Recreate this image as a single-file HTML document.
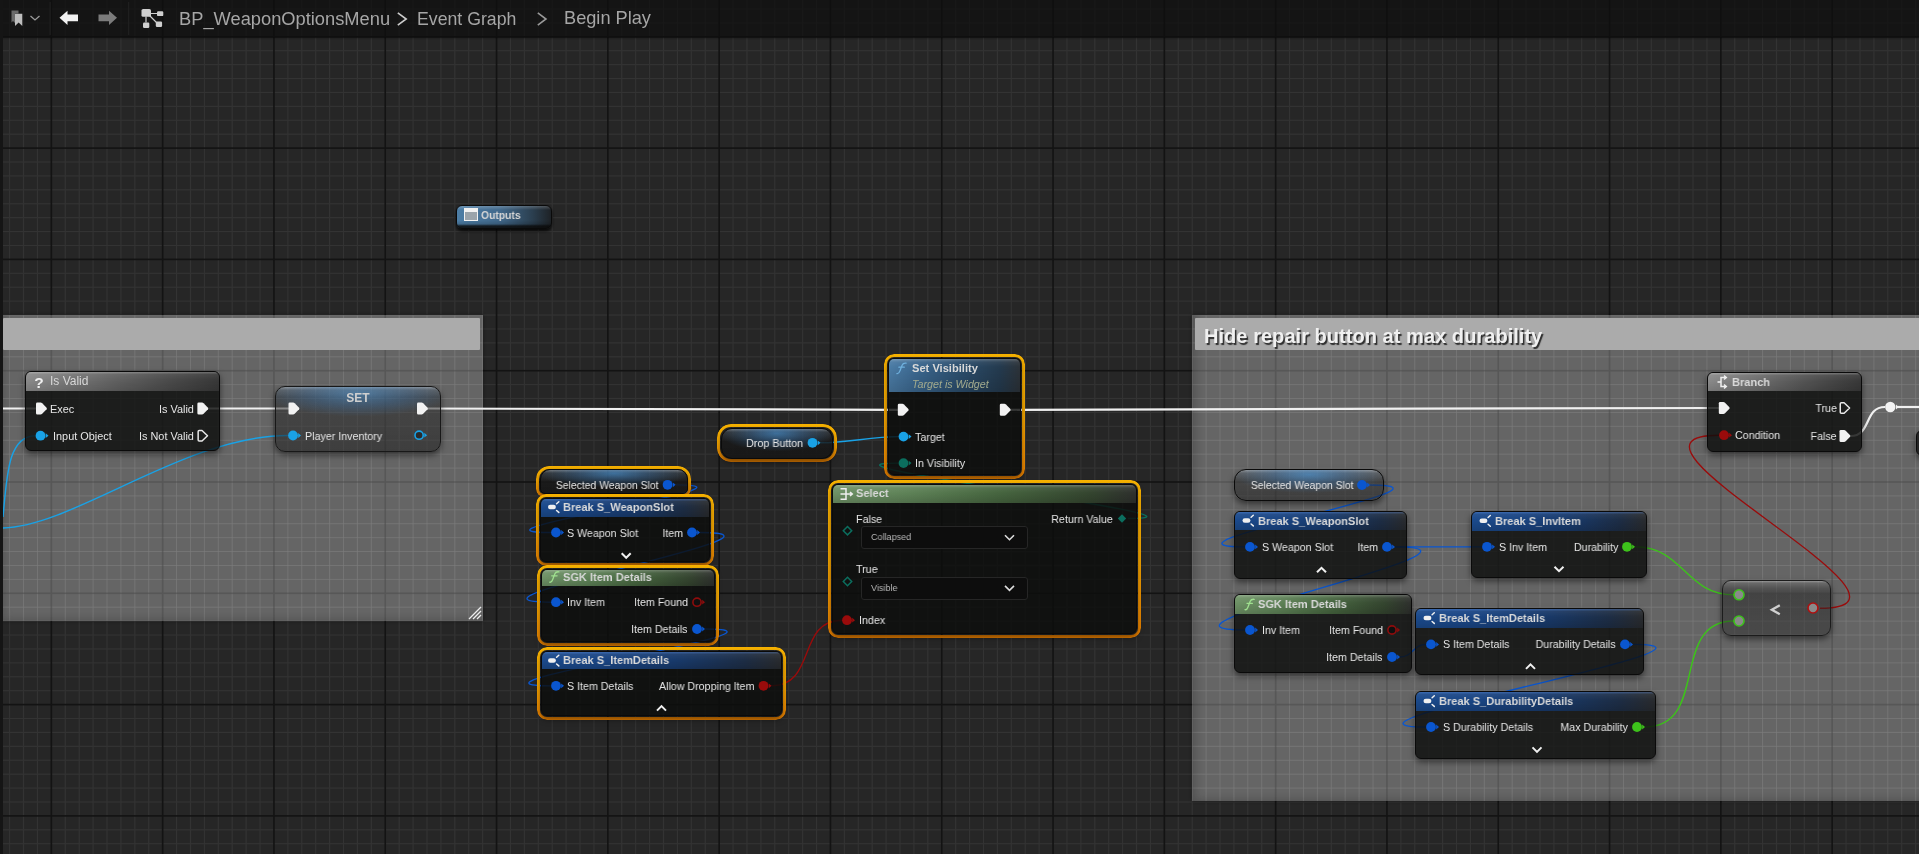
<!DOCTYPE html><html><head><meta charset="utf-8"><title>BP_WeaponOptionsMenu</title><style>html,body{margin:0;padding:0;width:1919px;height:854px;overflow:hidden;background:#262626;}body{position:relative;font-family:"Liberation Sans", sans-serif;-webkit-font-smoothing:antialiased;} body>div{will-change:transform;}.node{position:absolute;box-sizing:border-box;border-radius:6px;background:rgba(14,14,14,0.93);border:1px solid #0a0a0a;box-shadow:0 3px 6px rgba(0,0,0,0.5);overflow:hidden;}.hdr{position:absolute;left:0;top:0;right:0;}.sel{position:absolute;box-sizing:border-box;padding:3px;border-radius:9px;background:linear-gradient(to bottom,#f8b300 0%,#f2a400 50%,#e57d00 100%);-webkit-mask:linear-gradient(#000 0 0) content-box,linear-gradient(#000 0 0);-webkit-mask-composite:xor;mask-composite:exclude;}</style></head><body><svg style="position:absolute;left:0;top:0" width="1919" height="854"><rect x="-4.90" y="0" width="1.2" height="854" fill="#333333"/><rect x="9.01" y="0" width="1.2" height="854" fill="#333333"/><rect x="22.92" y="0" width="1.2" height="854" fill="#333333"/><rect x="36.84" y="0" width="1.2" height="854" fill="#333333"/><rect x="64.66" y="0" width="1.2" height="854" fill="#333333"/><rect x="78.58" y="0" width="1.2" height="854" fill="#333333"/><rect x="92.49" y="0" width="1.2" height="854" fill="#333333"/><rect x="106.40" y="0" width="1.2" height="854" fill="#333333"/><rect x="120.31" y="0" width="1.2" height="854" fill="#333333"/><rect x="134.23" y="0" width="1.2" height="854" fill="#333333"/><rect x="148.14" y="0" width="1.2" height="854" fill="#333333"/><rect x="175.96" y="0" width="1.2" height="854" fill="#333333"/><rect x="189.88" y="0" width="1.2" height="854" fill="#333333"/><rect x="203.79" y="0" width="1.2" height="854" fill="#333333"/><rect x="217.70" y="0" width="1.2" height="854" fill="#333333"/><rect x="231.61" y="0" width="1.2" height="854" fill="#333333"/><rect x="245.53" y="0" width="1.2" height="854" fill="#333333"/><rect x="259.44" y="0" width="1.2" height="854" fill="#333333"/><rect x="287.26" y="0" width="1.2" height="854" fill="#333333"/><rect x="301.17" y="0" width="1.2" height="854" fill="#333333"/><rect x="315.09" y="0" width="1.2" height="854" fill="#333333"/><rect x="329.00" y="0" width="1.2" height="854" fill="#333333"/><rect x="342.91" y="0" width="1.2" height="854" fill="#333333"/><rect x="356.82" y="0" width="1.2" height="854" fill="#333333"/><rect x="370.74" y="0" width="1.2" height="854" fill="#333333"/><rect x="398.56" y="0" width="1.2" height="854" fill="#333333"/><rect x="412.47" y="0" width="1.2" height="854" fill="#333333"/><rect x="426.39" y="0" width="1.2" height="854" fill="#333333"/><rect x="440.30" y="0" width="1.2" height="854" fill="#333333"/><rect x="454.21" y="0" width="1.2" height="854" fill="#333333"/><rect x="468.12" y="0" width="1.2" height="854" fill="#333333"/><rect x="482.04" y="0" width="1.2" height="854" fill="#333333"/><rect x="509.86" y="0" width="1.2" height="854" fill="#333333"/><rect x="523.77" y="0" width="1.2" height="854" fill="#333333"/><rect x="537.69" y="0" width="1.2" height="854" fill="#333333"/><rect x="551.60" y="0" width="1.2" height="854" fill="#333333"/><rect x="565.51" y="0" width="1.2" height="854" fill="#333333"/><rect x="579.42" y="0" width="1.2" height="854" fill="#333333"/><rect x="593.34" y="0" width="1.2" height="854" fill="#333333"/><rect x="621.16" y="0" width="1.2" height="854" fill="#333333"/><rect x="635.07" y="0" width="1.2" height="854" fill="#333333"/><rect x="648.99" y="0" width="1.2" height="854" fill="#333333"/><rect x="662.90" y="0" width="1.2" height="854" fill="#333333"/><rect x="676.81" y="0" width="1.2" height="854" fill="#333333"/><rect x="690.72" y="0" width="1.2" height="854" fill="#333333"/><rect x="704.64" y="0" width="1.2" height="854" fill="#333333"/><rect x="732.46" y="0" width="1.2" height="854" fill="#333333"/><rect x="746.37" y="0" width="1.2" height="854" fill="#333333"/><rect x="760.29" y="0" width="1.2" height="854" fill="#333333"/><rect x="774.20" y="0" width="1.2" height="854" fill="#333333"/><rect x="788.11" y="0" width="1.2" height="854" fill="#333333"/><rect x="802.02" y="0" width="1.2" height="854" fill="#333333"/><rect x="815.94" y="0" width="1.2" height="854" fill="#333333"/><rect x="843.76" y="0" width="1.2" height="854" fill="#333333"/><rect x="857.67" y="0" width="1.2" height="854" fill="#333333"/><rect x="871.59" y="0" width="1.2" height="854" fill="#333333"/><rect x="885.50" y="0" width="1.2" height="854" fill="#333333"/><rect x="899.41" y="0" width="1.2" height="854" fill="#333333"/><rect x="913.32" y="0" width="1.2" height="854" fill="#333333"/><rect x="927.24" y="0" width="1.2" height="854" fill="#333333"/><rect x="955.06" y="0" width="1.2" height="854" fill="#333333"/><rect x="968.97" y="0" width="1.2" height="854" fill="#333333"/><rect x="982.89" y="0" width="1.2" height="854" fill="#333333"/><rect x="996.80" y="0" width="1.2" height="854" fill="#333333"/><rect x="1010.71" y="0" width="1.2" height="854" fill="#333333"/><rect x="1024.62" y="0" width="1.2" height="854" fill="#333333"/><rect x="1038.54" y="0" width="1.2" height="854" fill="#333333"/><rect x="1066.36" y="0" width="1.2" height="854" fill="#333333"/><rect x="1080.28" y="0" width="1.2" height="854" fill="#333333"/><rect x="1094.19" y="0" width="1.2" height="854" fill="#333333"/><rect x="1108.10" y="0" width="1.2" height="854" fill="#333333"/><rect x="1122.01" y="0" width="1.2" height="854" fill="#333333"/><rect x="1135.92" y="0" width="1.2" height="854" fill="#333333"/><rect x="1149.84" y="0" width="1.2" height="854" fill="#333333"/><rect x="1177.66" y="0" width="1.2" height="854" fill="#333333"/><rect x="1191.58" y="0" width="1.2" height="854" fill="#333333"/><rect x="1205.49" y="0" width="1.2" height="854" fill="#333333"/><rect x="1219.40" y="0" width="1.2" height="854" fill="#333333"/><rect x="1233.31" y="0" width="1.2" height="854" fill="#333333"/><rect x="1247.22" y="0" width="1.2" height="854" fill="#333333"/><rect x="1261.14" y="0" width="1.2" height="854" fill="#333333"/><rect x="1288.96" y="0" width="1.2" height="854" fill="#333333"/><rect x="1302.88" y="0" width="1.2" height="854" fill="#333333"/><rect x="1316.79" y="0" width="1.2" height="854" fill="#333333"/><rect x="1330.70" y="0" width="1.2" height="854" fill="#333333"/><rect x="1344.61" y="0" width="1.2" height="854" fill="#333333"/><rect x="1358.53" y="0" width="1.2" height="854" fill="#333333"/><rect x="1372.44" y="0" width="1.2" height="854" fill="#333333"/><rect x="1400.26" y="0" width="1.2" height="854" fill="#333333"/><rect x="1414.17" y="0" width="1.2" height="854" fill="#333333"/><rect x="1428.09" y="0" width="1.2" height="854" fill="#333333"/><rect x="1442.00" y="0" width="1.2" height="854" fill="#333333"/><rect x="1455.91" y="0" width="1.2" height="854" fill="#333333"/><rect x="1469.83" y="0" width="1.2" height="854" fill="#333333"/><rect x="1483.74" y="0" width="1.2" height="854" fill="#333333"/><rect x="1511.56" y="0" width="1.2" height="854" fill="#333333"/><rect x="1525.47" y="0" width="1.2" height="854" fill="#333333"/><rect x="1539.39" y="0" width="1.2" height="854" fill="#333333"/><rect x="1553.30" y="0" width="1.2" height="854" fill="#333333"/><rect x="1567.21" y="0" width="1.2" height="854" fill="#333333"/><rect x="1581.12" y="0" width="1.2" height="854" fill="#333333"/><rect x="1595.04" y="0" width="1.2" height="854" fill="#333333"/><rect x="1622.86" y="0" width="1.2" height="854" fill="#333333"/><rect x="1636.78" y="0" width="1.2" height="854" fill="#333333"/><rect x="1650.69" y="0" width="1.2" height="854" fill="#333333"/><rect x="1664.60" y="0" width="1.2" height="854" fill="#333333"/><rect x="1678.51" y="0" width="1.2" height="854" fill="#333333"/><rect x="1692.42" y="0" width="1.2" height="854" fill="#333333"/><rect x="1706.34" y="0" width="1.2" height="854" fill="#333333"/><rect x="1734.16" y="0" width="1.2" height="854" fill="#333333"/><rect x="1748.08" y="0" width="1.2" height="854" fill="#333333"/><rect x="1761.99" y="0" width="1.2" height="854" fill="#333333"/><rect x="1775.90" y="0" width="1.2" height="854" fill="#333333"/><rect x="1789.81" y="0" width="1.2" height="854" fill="#333333"/><rect x="1803.72" y="0" width="1.2" height="854" fill="#333333"/><rect x="1817.64" y="0" width="1.2" height="854" fill="#333333"/><rect x="1845.46" y="0" width="1.2" height="854" fill="#333333"/><rect x="1859.38" y="0" width="1.2" height="854" fill="#333333"/><rect x="1873.29" y="0" width="1.2" height="854" fill="#333333"/><rect x="1887.20" y="0" width="1.2" height="854" fill="#333333"/><rect x="1901.11" y="0" width="1.2" height="854" fill="#333333"/><rect x="1915.03" y="0" width="1.2" height="854" fill="#333333"/><rect x="0" y="-5.54" width="1919" height="1.2" fill="#333333"/><rect x="0" y="8.37" width="1919" height="1.2" fill="#333333"/><rect x="0" y="22.29" width="1919" height="1.2" fill="#333333"/><rect x="0" y="50.11" width="1919" height="1.2" fill="#333333"/><rect x="0" y="64.03" width="1919" height="1.2" fill="#333333"/><rect x="0" y="77.94" width="1919" height="1.2" fill="#333333"/><rect x="0" y="91.85" width="1919" height="1.2" fill="#333333"/><rect x="0" y="105.76" width="1919" height="1.2" fill="#333333"/><rect x="0" y="119.67" width="1919" height="1.2" fill="#333333"/><rect x="0" y="133.59" width="1919" height="1.2" fill="#333333"/><rect x="0" y="161.41" width="1919" height="1.2" fill="#333333"/><rect x="0" y="175.32" width="1919" height="1.2" fill="#333333"/><rect x="0" y="189.24" width="1919" height="1.2" fill="#333333"/><rect x="0" y="203.15" width="1919" height="1.2" fill="#333333"/><rect x="0" y="217.06" width="1919" height="1.2" fill="#333333"/><rect x="0" y="230.97" width="1919" height="1.2" fill="#333333"/><rect x="0" y="244.89" width="1919" height="1.2" fill="#333333"/><rect x="0" y="272.71" width="1919" height="1.2" fill="#333333"/><rect x="0" y="286.62" width="1919" height="1.2" fill="#333333"/><rect x="0" y="300.54" width="1919" height="1.2" fill="#333333"/><rect x="0" y="314.45" width="1919" height="1.2" fill="#333333"/><rect x="0" y="328.36" width="1919" height="1.2" fill="#333333"/><rect x="0" y="342.27" width="1919" height="1.2" fill="#333333"/><rect x="0" y="356.19" width="1919" height="1.2" fill="#333333"/><rect x="0" y="384.01" width="1919" height="1.2" fill="#333333"/><rect x="0" y="397.92" width="1919" height="1.2" fill="#333333"/><rect x="0" y="411.84" width="1919" height="1.2" fill="#333333"/><rect x="0" y="425.75" width="1919" height="1.2" fill="#333333"/><rect x="0" y="439.66" width="1919" height="1.2" fill="#333333"/><rect x="0" y="453.57" width="1919" height="1.2" fill="#333333"/><rect x="0" y="467.49" width="1919" height="1.2" fill="#333333"/><rect x="0" y="495.31" width="1919" height="1.2" fill="#333333"/><rect x="0" y="509.22" width="1919" height="1.2" fill="#333333"/><rect x="0" y="523.14" width="1919" height="1.2" fill="#333333"/><rect x="0" y="537.05" width="1919" height="1.2" fill="#333333"/><rect x="0" y="550.96" width="1919" height="1.2" fill="#333333"/><rect x="0" y="564.88" width="1919" height="1.2" fill="#333333"/><rect x="0" y="578.79" width="1919" height="1.2" fill="#333333"/><rect x="0" y="606.61" width="1919" height="1.2" fill="#333333"/><rect x="0" y="620.52" width="1919" height="1.2" fill="#333333"/><rect x="0" y="634.44" width="1919" height="1.2" fill="#333333"/><rect x="0" y="648.35" width="1919" height="1.2" fill="#333333"/><rect x="0" y="662.26" width="1919" height="1.2" fill="#333333"/><rect x="0" y="676.17" width="1919" height="1.2" fill="#333333"/><rect x="0" y="690.09" width="1919" height="1.2" fill="#333333"/><rect x="0" y="717.91" width="1919" height="1.2" fill="#333333"/><rect x="0" y="731.82" width="1919" height="1.2" fill="#333333"/><rect x="0" y="745.74" width="1919" height="1.2" fill="#333333"/><rect x="0" y="759.65" width="1919" height="1.2" fill="#333333"/><rect x="0" y="773.56" width="1919" height="1.2" fill="#333333"/><rect x="0" y="787.48" width="1919" height="1.2" fill="#333333"/><rect x="0" y="801.39" width="1919" height="1.2" fill="#333333"/><rect x="0" y="829.21" width="1919" height="1.2" fill="#333333"/><rect x="0" y="843.12" width="1919" height="1.2" fill="#333333"/><rect x="0" y="857.04" width="1919" height="1.2" fill="#333333"/><rect x="50.55" y="0" width="1.6" height="854" fill="#131313"/><rect x="161.85" y="0" width="1.6" height="854" fill="#131313"/><rect x="273.15" y="0" width="1.6" height="854" fill="#131313"/><rect x="384.45" y="0" width="1.6" height="854" fill="#131313"/><rect x="495.75" y="0" width="1.6" height="854" fill="#131313"/><rect x="607.05" y="0" width="1.6" height="854" fill="#131313"/><rect x="718.35" y="0" width="1.6" height="854" fill="#131313"/><rect x="829.65" y="0" width="1.6" height="854" fill="#131313"/><rect x="940.95" y="0" width="1.6" height="854" fill="#131313"/><rect x="1052.25" y="0" width="1.6" height="854" fill="#131313"/><rect x="1163.55" y="0" width="1.6" height="854" fill="#131313"/><rect x="1274.85" y="0" width="1.6" height="854" fill="#131313"/><rect x="1386.15" y="0" width="1.6" height="854" fill="#131313"/><rect x="1497.45" y="0" width="1.6" height="854" fill="#131313"/><rect x="1608.75" y="0" width="1.6" height="854" fill="#131313"/><rect x="1720.05" y="0" width="1.6" height="854" fill="#131313"/><rect x="1831.35" y="0" width="1.6" height="854" fill="#131313"/><rect x="0" y="36.00" width="1919" height="1.6" fill="#131313"/><rect x="0" y="147.30" width="1919" height="1.6" fill="#131313"/><rect x="0" y="258.60" width="1919" height="1.6" fill="#131313"/><rect x="0" y="369.90" width="1919" height="1.6" fill="#131313"/><rect x="0" y="481.20" width="1919" height="1.6" fill="#131313"/><rect x="0" y="592.50" width="1919" height="1.6" fill="#131313"/><rect x="0" y="703.80" width="1919" height="1.6" fill="#131313"/><rect x="0" y="815.10" width="1919" height="1.6" fill="#131313"/></svg><div style="position:absolute;left:0.00px;top:315.20px;width:483.00px;height:306.30px;background:rgba(255,255,255,0.29);box-shadow:inset 6px -4px 9px -3px rgba(0,0,0,0.2), 0 0 3px rgba(0,0,0,0.5);"></div><svg style="position:absolute;left:0;top:0" width="1919" height="854"><g fill="rgba(255,255,255,0.045)"><rect x="9.01" y="315.20" width="1.2" height="306.30"/><rect x="22.92" y="315.20" width="1.2" height="306.30"/><rect x="36.84" y="315.20" width="1.2" height="306.30"/><rect x="64.66" y="315.20" width="1.2" height="306.30"/><rect x="78.58" y="315.20" width="1.2" height="306.30"/><rect x="92.49" y="315.20" width="1.2" height="306.30"/><rect x="106.40" y="315.20" width="1.2" height="306.30"/><rect x="120.31" y="315.20" width="1.2" height="306.30"/><rect x="134.23" y="315.20" width="1.2" height="306.30"/><rect x="148.14" y="315.20" width="1.2" height="306.30"/><rect x="175.96" y="315.20" width="1.2" height="306.30"/><rect x="189.88" y="315.20" width="1.2" height="306.30"/><rect x="203.79" y="315.20" width="1.2" height="306.30"/><rect x="217.70" y="315.20" width="1.2" height="306.30"/><rect x="231.61" y="315.20" width="1.2" height="306.30"/><rect x="245.53" y="315.20" width="1.2" height="306.30"/><rect x="259.44" y="315.20" width="1.2" height="306.30"/><rect x="287.26" y="315.20" width="1.2" height="306.30"/><rect x="301.17" y="315.20" width="1.2" height="306.30"/><rect x="315.09" y="315.20" width="1.2" height="306.30"/><rect x="329.00" y="315.20" width="1.2" height="306.30"/><rect x="342.91" y="315.20" width="1.2" height="306.30"/><rect x="356.82" y="315.20" width="1.2" height="306.30"/><rect x="370.74" y="315.20" width="1.2" height="306.30"/><rect x="398.56" y="315.20" width="1.2" height="306.30"/><rect x="412.47" y="315.20" width="1.2" height="306.30"/><rect x="426.39" y="315.20" width="1.2" height="306.30"/><rect x="440.30" y="315.20" width="1.2" height="306.30"/><rect x="454.21" y="315.20" width="1.2" height="306.30"/><rect x="468.12" y="315.20" width="1.2" height="306.30"/><rect x="482.04" y="315.20" width="1.2" height="306.30"/><rect x="0.00" y="328.36" width="483.00" height="1.2"/><rect x="0.00" y="342.27" width="483.00" height="1.2"/><rect x="0.00" y="356.19" width="483.00" height="1.2"/><rect x="0.00" y="384.01" width="483.00" height="1.2"/><rect x="0.00" y="397.92" width="483.00" height="1.2"/><rect x="0.00" y="411.84" width="483.00" height="1.2"/><rect x="0.00" y="425.75" width="483.00" height="1.2"/><rect x="0.00" y="439.66" width="483.00" height="1.2"/><rect x="0.00" y="453.57" width="483.00" height="1.2"/><rect x="0.00" y="467.49" width="483.00" height="1.2"/><rect x="0.00" y="495.31" width="483.00" height="1.2"/><rect x="0.00" y="509.22" width="483.00" height="1.2"/><rect x="0.00" y="523.14" width="483.00" height="1.2"/><rect x="0.00" y="537.05" width="483.00" height="1.2"/><rect x="0.00" y="550.96" width="483.00" height="1.2"/><rect x="0.00" y="564.88" width="483.00" height="1.2"/><rect x="0.00" y="578.79" width="483.00" height="1.2"/><rect x="0.00" y="606.61" width="483.00" height="1.2"/><rect x="0.00" y="620.52" width="483.00" height="1.2"/></g></svg><div style="position:absolute;left:3.00px;top:318.20px;width:477.00px;height:32.00px;background:#ababab;border-radius:1px;"></div><div style="position:absolute;left:1192.00px;top:315.20px;width:738.00px;height:485.80px;background:rgba(255,255,255,0.29);box-shadow:inset 6px -4px 9px -3px rgba(0,0,0,0.2), 0 0 3px rgba(0,0,0,0.5);"></div><svg style="position:absolute;left:0;top:0" width="1919" height="854"><g fill="rgba(255,255,255,0.045)"><rect x="1191.58" y="315.20" width="1.2" height="485.80"/><rect x="1205.49" y="315.20" width="1.2" height="485.80"/><rect x="1219.40" y="315.20" width="1.2" height="485.80"/><rect x="1233.31" y="315.20" width="1.2" height="485.80"/><rect x="1247.22" y="315.20" width="1.2" height="485.80"/><rect x="1261.14" y="315.20" width="1.2" height="485.80"/><rect x="1288.96" y="315.20" width="1.2" height="485.80"/><rect x="1302.88" y="315.20" width="1.2" height="485.80"/><rect x="1316.79" y="315.20" width="1.2" height="485.80"/><rect x="1330.70" y="315.20" width="1.2" height="485.80"/><rect x="1344.61" y="315.20" width="1.2" height="485.80"/><rect x="1358.53" y="315.20" width="1.2" height="485.80"/><rect x="1372.44" y="315.20" width="1.2" height="485.80"/><rect x="1400.26" y="315.20" width="1.2" height="485.80"/><rect x="1414.17" y="315.20" width="1.2" height="485.80"/><rect x="1428.09" y="315.20" width="1.2" height="485.80"/><rect x="1442.00" y="315.20" width="1.2" height="485.80"/><rect x="1455.91" y="315.20" width="1.2" height="485.80"/><rect x="1469.83" y="315.20" width="1.2" height="485.80"/><rect x="1483.74" y="315.20" width="1.2" height="485.80"/><rect x="1511.56" y="315.20" width="1.2" height="485.80"/><rect x="1525.47" y="315.20" width="1.2" height="485.80"/><rect x="1539.39" y="315.20" width="1.2" height="485.80"/><rect x="1553.30" y="315.20" width="1.2" height="485.80"/><rect x="1567.21" y="315.20" width="1.2" height="485.80"/><rect x="1581.12" y="315.20" width="1.2" height="485.80"/><rect x="1595.04" y="315.20" width="1.2" height="485.80"/><rect x="1622.86" y="315.20" width="1.2" height="485.80"/><rect x="1636.78" y="315.20" width="1.2" height="485.80"/><rect x="1650.69" y="315.20" width="1.2" height="485.80"/><rect x="1664.60" y="315.20" width="1.2" height="485.80"/><rect x="1678.51" y="315.20" width="1.2" height="485.80"/><rect x="1692.42" y="315.20" width="1.2" height="485.80"/><rect x="1706.34" y="315.20" width="1.2" height="485.80"/><rect x="1734.16" y="315.20" width="1.2" height="485.80"/><rect x="1748.08" y="315.20" width="1.2" height="485.80"/><rect x="1761.99" y="315.20" width="1.2" height="485.80"/><rect x="1775.90" y="315.20" width="1.2" height="485.80"/><rect x="1789.81" y="315.20" width="1.2" height="485.80"/><rect x="1803.72" y="315.20" width="1.2" height="485.80"/><rect x="1817.64" y="315.20" width="1.2" height="485.80"/><rect x="1845.46" y="315.20" width="1.2" height="485.80"/><rect x="1859.38" y="315.20" width="1.2" height="485.80"/><rect x="1873.29" y="315.20" width="1.2" height="485.80"/><rect x="1887.20" y="315.20" width="1.2" height="485.80"/><rect x="1901.11" y="315.20" width="1.2" height="485.80"/><rect x="1915.03" y="315.20" width="1.2" height="485.80"/><rect x="1192.00" y="328.36" width="727.00" height="1.2"/><rect x="1192.00" y="342.27" width="727.00" height="1.2"/><rect x="1192.00" y="356.19" width="727.00" height="1.2"/><rect x="1192.00" y="384.01" width="727.00" height="1.2"/><rect x="1192.00" y="397.92" width="727.00" height="1.2"/><rect x="1192.00" y="411.84" width="727.00" height="1.2"/><rect x="1192.00" y="425.75" width="727.00" height="1.2"/><rect x="1192.00" y="439.66" width="727.00" height="1.2"/><rect x="1192.00" y="453.57" width="727.00" height="1.2"/><rect x="1192.00" y="467.49" width="727.00" height="1.2"/><rect x="1192.00" y="495.31" width="727.00" height="1.2"/><rect x="1192.00" y="509.22" width="727.00" height="1.2"/><rect x="1192.00" y="523.14" width="727.00" height="1.2"/><rect x="1192.00" y="537.05" width="727.00" height="1.2"/><rect x="1192.00" y="550.96" width="727.00" height="1.2"/><rect x="1192.00" y="564.88" width="727.00" height="1.2"/><rect x="1192.00" y="578.79" width="727.00" height="1.2"/><rect x="1192.00" y="606.61" width="727.00" height="1.2"/><rect x="1192.00" y="620.52" width="727.00" height="1.2"/><rect x="1192.00" y="634.44" width="727.00" height="1.2"/><rect x="1192.00" y="648.35" width="727.00" height="1.2"/><rect x="1192.00" y="662.26" width="727.00" height="1.2"/><rect x="1192.00" y="676.17" width="727.00" height="1.2"/><rect x="1192.00" y="690.09" width="727.00" height="1.2"/><rect x="1192.00" y="717.91" width="727.00" height="1.2"/><rect x="1192.00" y="731.82" width="727.00" height="1.2"/><rect x="1192.00" y="745.74" width="727.00" height="1.2"/><rect x="1192.00" y="759.65" width="727.00" height="1.2"/><rect x="1192.00" y="773.56" width="727.00" height="1.2"/><rect x="1192.00" y="787.48" width="727.00" height="1.2"/></g></svg><div style="position:absolute;left:1195.00px;top:318.20px;width:735.00px;height:32.00px;background:#ababab;border-radius:1px;"></div><div style="position:absolute;top:325.21px;font-size:20.1px;line-height:23.11px;font-weight:700;color:#f0f0f0;white-space:nowrap;left:1203.80px;transform-origin:left top;text-shadow:1.5px 1.5px 1px rgba(0,0,0,0.75);">Hide repair button at max durability</div><svg style="position:absolute;left:466px;top:604px" width="16" height="16"><path d="M3 15 L15 3 M7 15 L15 7 M11 15 L15 11" stroke="#eeeeee" stroke-width="1.3"/></svg><svg style="position:absolute;left:0;top:0" width="1919" height="854"><path d="M0 408.5 H40" fill="none" stroke="#f0f0f0" stroke-width="2.2"/><path d="M205 408.5 H292" fill="none" stroke="#f0f0f0" stroke-width="2.2"/><path d="M425 408.5 C600 408.5 750 409.8 900 409.8" fill="none" stroke="#f0f0f0" stroke-width="2.2"/><path d="M1008 409.8 C1200 409.8 1500 408 1722 408" fill="none" stroke="#f0f0f0" stroke-width="2.2"/><path d="M1850.50 436.00 C1871.67 436.00 1863.83 407.00 1885.00 407.00" fill="none" stroke="#f0f0f0" stroke-width="2.2" stroke-opacity="1.0"/><path d="M1896 407 H1925" fill="none" stroke="#f0f0f0" stroke-width="2.2"/><path d="M3 517 C7 475 8 436 35.5 435.7" fill="none" stroke="#19a2e6" stroke-width="1.45"/><path d="M3 528 C75 526 185 435.5 288 435.5" fill="none" stroke="#19a2e6" stroke-width="1.45"/><path d="M675.60 484.80 C782.52 484.80 444.08 532.50 551.00 532.50" fill="none" stroke="#0a56cf" stroke-width="1.35" stroke-opacity="1.0"/><path d="M700.00 532.50 C822.85 532.50 428.15 602.20 551.00 602.20" fill="none" stroke="#0a56cf" stroke-width="1.35" stroke-opacity="1.0"/><path d="M705.00 629.00 C821.40 629.00 434.60 685.80 551.00 685.80" fill="none" stroke="#0a56cf" stroke-width="1.35" stroke-opacity="1.0"/><path d="M771.50 685.80 C816.87 685.80 796.63 620.20 842.00 620.20" fill="none" stroke="#9a0b0b" stroke-width="1.35" stroke-opacity="1.0"/><path d="M820.50 442.80 C848.57 442.80 870.43 436.60 898.50 436.60" fill="none" stroke="#19a2e6" stroke-width="1.4" stroke-opacity="1.0"/><path d="M1128.00 518.50 C1243.70 518.50 782.80 463.10 898.50 463.10" fill="none" stroke="#0b6e5e" stroke-width="1.35" stroke-opacity="1.0"/><path d="M1370.00 485.00 C1484.28 485.00 1130.72 546.90 1245.00 546.90" fill="none" stroke="#0a56cf" stroke-width="1.35" stroke-opacity="1.0"/><path d="M1395.00 546.90 C1424.03 546.90 1452.97 546.80 1482.00 546.80" fill="none" stroke="#0a56cf" stroke-width="1.35" stroke-opacity="1.0"/><path d="M1395.00 546.90 C1524.55 546.90 1115.45 630.00 1245.00 630.00" fill="none" stroke="#0a56cf" stroke-width="1.35" stroke-opacity="1.0"/><path d="M1400.00 657.00 C1412.87 657.00 1413.13 644.40 1426.00 644.40" fill="none" stroke="#0a56cf" stroke-width="1.35" stroke-opacity="1.0"/><path d="M1633.00 644.40 C1762.30 644.40 1296.70 727.00 1426.00 727.00" fill="none" stroke="#0a56cf" stroke-width="1.35" stroke-opacity="1.0"/><path d="M1635.00 546.80 C1684.00 546.80 1685.00 594.80 1734.00 594.80" fill="none" stroke="#3dc21b" stroke-width="1.4" stroke-opacity="1.0"/><path d="M1645.00 727.00 C1710.00 727.00 1669.00 621.00 1734.00 621.00" fill="none" stroke="#3dc21b" stroke-width="1.4" stroke-opacity="1.0"/><path d="M1820.00 608.20 C1953.33 608.20 1585.67 435.20 1719.00 435.20" fill="none" stroke="#9a0b0b" stroke-width="1.35" stroke-opacity="1.0"/></svg><div class="node" style="left:24.60px;top:371.30px;width:195.10px;height:80.20px;background:rgba(12,14,12,0.82);border-radius:6px"><div class="hdr" style="height:19.30px;background:linear-gradient(to bottom, rgba(255,255,255,0.28) 0px, rgba(255,255,255,0.06) 2.5px, rgba(0,0,0,0) 8px, rgba(0,0,0,0.12) 100%), linear-gradient(to right, #8a8a8a 0%, #7a7a7a 18%, #626262 45%, #4a4a4a 75%, #383838 100%)"></div></div><div style="position:absolute;top:375.04px;font-size:12px;line-height:13.80px;font-weight:400;color:#d8d8d8;white-space:nowrap;left:50.00px;transform-origin:left top;">Is Valid</div><div style="position:absolute;top:402.54px;font-size:10.9px;line-height:12.54px;font-weight:400;color:#e6e6e6;white-space:nowrap;left:49.60px;transform-origin:left top;">Exec</div><div style="position:absolute;top:429.74px;font-size:10.9px;line-height:12.54px;font-weight:400;color:#e6e6e6;white-space:nowrap;left:52.60px;transform-origin:left top;">Input Object</div><div style="position:absolute;top:402.54px;font-size:10.9px;line-height:12.54px;font-weight:400;color:#e6e6e6;white-space:nowrap;right:1724.90px;transform-origin:right top;">Is Valid</div><div style="position:absolute;top:429.74px;font-size:10.9px;line-height:12.54px;font-weight:400;color:#e6e6e6;white-space:nowrap;right:1724.90px;transform-origin:right top;">Is Not Valid</div><div class="node" style="left:274.5px;top:385.7px;width:166.1px;height:65.5px;border-radius:10px;background:radial-gradient(ellipse 58% 36% at 50% 10%, rgba(75,150,215,0.55) 0%, rgba(60,125,190,0.3) 55%, rgba(60,130,200,0) 100%), linear-gradient(to bottom, rgba(190,190,190,0.55) 0px, rgba(90,90,90,0.45) 3px, rgba(40,40,40,0.5) 10px, rgba(30,30,30,0.55) 100%);border:1px solid #181818;"></div><div style="position:absolute;top:392.34px;font-size:12px;line-height:13.80px;font-weight:700;color:#cfcfcf;white-space:nowrap;left:357.70px;transform:translateX(-50%);">SET</div><div style="position:absolute;top:429.54px;font-size:10.9px;line-height:12.54px;font-weight:400;color:#e6e6e6;white-space:nowrap;left:304.60px;transform-origin:left top;transform:scaleX(0.98);">Player Inventory</div><div class="node" style="left:455.7px;top:205px;width:96.3px;height:24px;border-radius:6px;background:linear-gradient(to bottom, rgba(255,255,255,0.2) 0px, rgba(255,255,255,0) 4px, rgba(0,0,0,0) 14px, rgba(0,0,0,0.15) 18px, rgba(10,10,10,0.85) 20px, rgba(12,12,12,0.9) 100%), linear-gradient(to right, #4d7ea6 0%, #41698c 45%, #2b3f50 80%, #1e2226 100%);box-shadow:0 2px 3px rgba(0,0,0,0.8);"></div><div style="position:absolute;left:464.00px;top:208.00px;width:14.00px;height:13.00px;box-sizing:border-box;border:1.2px solid #f2f2f2;border-top-width:4px;background:#9ba4ab;"></div><div style="position:absolute;top:208.79px;font-size:11.5px;line-height:13.22px;font-weight:700;color:#d6d6d6;white-space:nowrap;left:481.00px;transform-origin:left top;transform:scaleX(0.9);">Outputs</div><div class="sel" style="left:716.7px;top:424.2px;width:120px;height:38.4px;border-radius:14px"></div><div class="node" style="left:721.3px;top:427.9px;width:111.9px;height:30.9px;border-radius:11px;background:radial-gradient(ellipse 52% 62% at 50% 15%, rgba(70,150,220,0.62) 0%, rgba(60,130,200,0.35) 45%, rgba(60,130,200,0) 100%), linear-gradient(to bottom, rgba(190,190,190,0.5) 0px, rgba(60,60,60,0.6) 3px, rgba(25,25,25,0.85) 12px, rgba(22,22,22,0.9) 100%);"></div><div style="position:absolute;top:436.84px;font-size:10.9px;line-height:12.54px;font-weight:400;color:#e6e6e6;white-space:nowrap;right:1115.40px;transform-origin:right top;transform:scaleX(0.98);">Drop Button</div><div class="sel" style="left:884.20px;top:354.20px;width:140.80px;height:124.80px;border-radius:10px"></div><div class="node" style="left:888.20px;top:358.20px;width:132.80px;height:116.80px;background:rgba(12,14,12,0.82);border-radius:6px"><div class="hdr" style="height:33.40px;background:linear-gradient(to bottom, rgba(255,255,255,0.25) 0px, rgba(255,255,255,0.06) 3px, rgba(0,0,0,0) 8px, rgba(0,0,0,0.15) 100%), linear-gradient(to right, #4b7ca6 0%, #3c6890 20%, #2b4d6c 55%, #243a4e 85%, #2c3238 100%)"></div></div><div style="position:absolute;top:362.35px;font-size:11px;line-height:12.65px;font-weight:700;color:#d9d9d9;white-space:nowrap;left:911.60px;transform-origin:left top;transform:scaleX(1.01);">Set Visibility</div><div style="position:absolute;top:378.12px;font-size:10.7px;line-height:12.30px;font-weight:400;color:#a3ab8e;white-space:nowrap;font-style:italic;left:911.70px;transform-origin:left top;">Target is Widget</div><div style="position:absolute;top:430.64px;font-size:10.9px;line-height:12.54px;font-weight:400;color:#e6e6e6;white-space:nowrap;left:914.60px;transform-origin:left top;transform:scaleX(0.98);">Target</div><div style="position:absolute;top:457.14px;font-size:10.9px;line-height:12.54px;font-weight:400;color:#e6e6e6;white-space:nowrap;left:914.60px;transform-origin:left top;transform:scaleX(0.98);">In Visibility</div><div class="sel" style="left:828.20px;top:480.40px;width:313.00px;height:158.00px;border-radius:10px"></div><div class="node" style="left:832.20px;top:484.40px;width:305.00px;height:150.00px;background:rgba(12,14,12,0.82);border-radius:6px"><div class="hdr" style="height:17.60px;background:linear-gradient(to bottom, rgba(255,255,255,0.25) 0px, rgba(255,255,255,0.06) 3px, rgba(0,0,0,0) 8px, rgba(0,0,0,0.15) 100%), linear-gradient(to right, #6e9166 0%, #5e8257 25%, #46653f 55%, #34452f 85%, #2e302d 100%)"></div></div><div style="position:absolute;top:486.79px;font-size:11.5px;line-height:13.22px;font-weight:700;color:#d9d9d9;white-space:nowrap;left:856.30px;transform-origin:left top;transform:scaleX(0.9594999999999999);">Select</div><div style="position:absolute;top:512.84px;font-size:10.9px;line-height:12.54px;font-weight:400;color:#e6e6e6;white-space:nowrap;left:855.60px;transform-origin:left top;transform:scaleX(0.98);">False</div><div style="position:absolute;left:861.40px;top:525.80px;width:166.60px;height:22.80px;box-sizing:border-box;background:#0d0d0d;border:1px solid #262626;border-radius:3px;"></div><div style="position:absolute;top:532.20px;font-size:9.5px;line-height:10.92px;font-weight:400;color:#b8b8b8;white-space:nowrap;left:870.50px;transform-origin:left top;transform:scaleX(0.95);">Collapsed</div><div style="position:absolute;top:563.04px;font-size:10.9px;line-height:12.54px;font-weight:400;color:#e6e6e6;white-space:nowrap;left:855.60px;transform-origin:left top;transform:scaleX(0.98);">True</div><div style="position:absolute;left:861.40px;top:576.50px;width:166.60px;height:22.90px;box-sizing:border-box;background:#0d0d0d;border:1px solid #262626;border-radius:3px;"></div><div style="position:absolute;top:583.00px;font-size:9.5px;line-height:10.92px;font-weight:400;color:#b8b8b8;white-space:nowrap;left:870.50px;transform-origin:left top;transform:scaleX(0.95);">Visible</div><div style="position:absolute;top:614.24px;font-size:10.9px;line-height:12.54px;font-weight:400;color:#e6e6e6;white-space:nowrap;left:859.10px;transform-origin:left top;transform:scaleX(0.98);">Index</div><div style="position:absolute;top:512.84px;font-size:10.9px;line-height:12.54px;font-weight:400;color:#e6e6e6;white-space:nowrap;right:805.90px;transform-origin:right top;transform:scaleX(0.98);">Return Value</div><div class="sel" style="left:536px;top:465.8px;width:154.7px;height:31px;border-radius:13px 13px 8px 8px"></div><div class="node" style="left:539.5px;top:469.2px;width:147.7px;height:24.5px;border-radius:10px 10px 5px 5px;background:radial-gradient(ellipse 52% 62% at 50% 15%, rgba(70,150,220,0.62) 0%, rgba(60,130,200,0.35) 45%, rgba(60,130,200,0) 100%), linear-gradient(to bottom, rgba(190,190,190,0.5) 0px, rgba(60,60,60,0.6) 3px, rgba(25,25,25,0.85) 12px, rgba(22,22,22,0.9) 100%);"></div><div style="position:absolute;top:478.84px;font-size:10.9px;line-height:12.54px;font-weight:400;color:#e6e6e6;white-space:nowrap;right:1260.90px;transform-origin:right top;transform:scaleX(0.955);">Selected Weapon Slot</div><div class="sel" style="left:536.00px;top:493.60px;width:178.00px;height:71.60px;border-radius:10px"></div><div class="node" style="left:540.00px;top:497.60px;width:170.00px;height:63.60px;background:rgba(12,14,12,0.82);border-radius:6px"><div class="hdr" style="height:18.30px;background:linear-gradient(to bottom, rgba(120,170,255,0.35) 0px, rgba(255,255,255,0.05) 2.5px, rgba(0,0,0,0) 8px, rgba(0,0,0,0.15) 100%), linear-gradient(to right, #1b4a8c 0%, #1a4584 25%, #183a6c 55%, #1d2d45 85%, #292b2e 100%)"></div></div><div style="position:absolute;top:500.99px;font-size:11.5px;line-height:13.22px;font-weight:700;color:#d9d9d9;white-space:nowrap;left:563.30px;transform-origin:left top;transform:scaleX(0.9594999999999999);">Break S_WeaponSlot</div><div style="position:absolute;top:526.54px;font-size:10.9px;line-height:12.54px;font-weight:400;color:#e6e6e6;white-space:nowrap;left:566.60px;transform-origin:left top;transform:scaleX(0.98);">S Weapon Slot</div><div style="position:absolute;top:526.54px;font-size:10.9px;line-height:12.54px;font-weight:400;color:#e6e6e6;white-space:nowrap;right:1235.90px;transform-origin:right top;transform:scaleX(0.98);">Item</div><div class="sel" style="left:537.00px;top:565.00px;width:182.00px;height:80.80px;border-radius:10px"></div><div class="node" style="left:541.00px;top:569.00px;width:174.00px;height:72.80px;background:rgba(12,14,12,0.82);border-radius:6px"><div class="hdr" style="height:16.00px;background:linear-gradient(to bottom, rgba(255,255,255,0.25) 0px, rgba(255,255,255,0.06) 3px, rgba(0,0,0,0) 8px, rgba(0,0,0,0.15) 100%), linear-gradient(to right, #6e9166 0%, #5e8257 25%, #46653f 55%, #34452f 85%, #2e302d 100%)"></div></div><div style="position:absolute;top:570.89px;font-size:11.5px;line-height:13.22px;font-weight:700;color:#d9d9d9;white-space:nowrap;left:563.30px;transform-origin:left top;transform:scaleX(0.9594999999999999);">SGK Item Details</div><div style="position:absolute;top:596.24px;font-size:10.9px;line-height:12.54px;font-weight:400;color:#e6e6e6;white-space:nowrap;left:566.60px;transform-origin:left top;transform:scaleX(0.98);">Inv Item</div><div style="position:absolute;top:596.24px;font-size:10.9px;line-height:12.54px;font-weight:400;color:#e6e6e6;white-space:nowrap;right:1231.40px;transform-origin:right top;transform:scaleX(0.98);">Item Found</div><div style="position:absolute;top:623.04px;font-size:10.9px;line-height:12.54px;font-weight:400;color:#e6e6e6;white-space:nowrap;right:1231.40px;transform-origin:right top;transform:scaleX(0.98);">Item Details</div><div class="sel" style="left:537.00px;top:647.40px;width:248.70px;height:73.00px;border-radius:10px"></div><div class="node" style="left:541.00px;top:651.40px;width:240.70px;height:65.00px;background:rgba(12,14,12,0.82);border-radius:6px"><div class="hdr" style="height:17.20px;background:linear-gradient(to bottom, rgba(120,170,255,0.35) 0px, rgba(255,255,255,0.05) 2.5px, rgba(0,0,0,0) 8px, rgba(0,0,0,0.15) 100%), linear-gradient(to right, #1b4a8c 0%, #1a4584 25%, #183a6c 55%, #1d2d45 85%, #292b2e 100%)"></div></div><div style="position:absolute;top:654.19px;font-size:11.5px;line-height:13.22px;font-weight:700;color:#d9d9d9;white-space:nowrap;left:563.30px;transform-origin:left top;transform:scaleX(0.9594999999999999);">Break S_ItemDetails</div><div style="position:absolute;top:679.84px;font-size:10.9px;line-height:12.54px;font-weight:400;color:#e6e6e6;white-space:nowrap;left:566.60px;transform-origin:left top;transform:scaleX(0.98);">S Item Details</div><div style="position:absolute;top:679.84px;font-size:10.9px;line-height:12.54px;font-weight:400;color:#e6e6e6;white-space:nowrap;right:1164.90px;transform-origin:right top;transform:scaleX(0.98);">Allow Dropping Item</div><div class="node" style="left:1234px;top:469px;width:150.4px;height:31.7px;border-radius:12px;background:radial-gradient(ellipse 52% 62% at 50% 15%, rgba(70,150,220,0.62) 0%, rgba(60,130,200,0.35) 45%, rgba(60,130,200,0) 100%), linear-gradient(to bottom, rgba(190,190,190,0.55) 0px, rgba(90,90,90,0.45) 3px, rgba(40,40,40,0.5) 10px, rgba(30,30,30,0.55) 100%);"></div><div style="position:absolute;top:479.04px;font-size:10.9px;line-height:12.54px;font-weight:400;color:#e6e6e6;white-space:nowrap;right:565.40px;transform-origin:right top;transform:scaleX(0.955);">Selected Weapon Slot</div><div class="node" style="left:1234.00px;top:510.80px;width:173.00px;height:67.80px;background:rgba(12,14,12,0.82);border-radius:6px"><div class="hdr" style="height:18.20px;background:linear-gradient(to bottom, rgba(120,170,255,0.35) 0px, rgba(255,255,255,0.05) 2.5px, rgba(0,0,0,0) 8px, rgba(0,0,0,0.15) 100%), linear-gradient(to right, #1b4a8c 0%, #1a4584 25%, #183a6c 55%, #1d2d45 85%, #292b2e 100%)"></div></div><div style="position:absolute;top:514.89px;font-size:11.5px;line-height:13.22px;font-weight:700;color:#d9d9d9;white-space:nowrap;left:1258.30px;transform-origin:left top;transform:scaleX(0.9594999999999999);">Break S_WeaponSlot</div><div style="position:absolute;top:540.94px;font-size:10.9px;line-height:12.54px;font-weight:400;color:#e6e6e6;white-space:nowrap;left:1262.10px;transform-origin:left top;transform:scaleX(0.98);">S Weapon Slot</div><div style="position:absolute;top:540.94px;font-size:10.9px;line-height:12.54px;font-weight:400;color:#e6e6e6;white-space:nowrap;right:540.90px;transform-origin:right top;transform:scaleX(0.98);">Item</div><div class="node" style="left:1234.00px;top:594.00px;width:178.00px;height:78.60px;background:rgba(12,14,12,0.82);border-radius:6px"><div class="hdr" style="height:19.00px;background:linear-gradient(to bottom, rgba(255,255,255,0.25) 0px, rgba(255,255,255,0.06) 3px, rgba(0,0,0,0) 8px, rgba(0,0,0,0.15) 100%), linear-gradient(to right, #6e9166 0%, #5e8257 25%, #46653f 55%, #34452f 85%, #2e302d 100%)"></div></div><div style="position:absolute;top:598.39px;font-size:11.5px;line-height:13.22px;font-weight:700;color:#d9d9d9;white-space:nowrap;left:1258.30px;transform-origin:left top;transform:scaleX(0.9594999999999999);">SGK Item Details</div><div style="position:absolute;top:624.04px;font-size:10.9px;line-height:12.54px;font-weight:400;color:#e6e6e6;white-space:nowrap;left:1262.10px;transform-origin:left top;transform:scaleX(0.98);">Inv Item</div><div style="position:absolute;top:624.04px;font-size:10.9px;line-height:12.54px;font-weight:400;color:#e6e6e6;white-space:nowrap;right:536.40px;transform-origin:right top;transform:scaleX(0.98);">Item Found</div><div style="position:absolute;top:651.04px;font-size:10.9px;line-height:12.54px;font-weight:400;color:#e6e6e6;white-space:nowrap;right:536.40px;transform-origin:right top;transform:scaleX(0.98);">Item Details</div><div class="node" style="left:1471.00px;top:511.00px;width:175.50px;height:67.40px;background:rgba(12,14,12,0.82);border-radius:6px"><div class="hdr" style="height:18.70px;background:linear-gradient(to bottom, rgba(120,170,255,0.35) 0px, rgba(255,255,255,0.05) 2.5px, rgba(0,0,0,0) 8px, rgba(0,0,0,0.15) 100%), linear-gradient(to right, #1b4a8c 0%, #1a4584 25%, #183a6c 55%, #1d2d45 85%, #292b2e 100%)"></div></div><div style="position:absolute;top:514.89px;font-size:11.5px;line-height:13.22px;font-weight:700;color:#d9d9d9;white-space:nowrap;left:1495.30px;transform-origin:left top;transform:scaleX(0.9594999999999999);">Break S_InvItem</div><div style="position:absolute;top:540.84px;font-size:10.9px;line-height:12.54px;font-weight:400;color:#e6e6e6;white-space:nowrap;left:1498.60px;transform-origin:left top;transform:scaleX(0.98);">S Inv Item</div><div style="position:absolute;top:540.84px;font-size:10.9px;line-height:12.54px;font-weight:400;color:#e6e6e6;white-space:nowrap;right:300.90px;transform-origin:right top;transform:scaleX(0.98);">Durability</div><div class="node" style="left:1415.20px;top:608.40px;width:229.10px;height:67.00px;background:rgba(12,14,12,0.82);border-radius:6px"><div class="hdr" style="height:18.60px;background:linear-gradient(to bottom, rgba(120,170,255,0.35) 0px, rgba(255,255,255,0.05) 2.5px, rgba(0,0,0,0) 8px, rgba(0,0,0,0.15) 100%), linear-gradient(to right, #1b4a8c 0%, #1a4584 25%, #183a6c 55%, #1d2d45 85%, #292b2e 100%)"></div></div><div style="position:absolute;top:612.19px;font-size:11.5px;line-height:13.22px;font-weight:700;color:#d9d9d9;white-space:nowrap;left:1439.30px;transform-origin:left top;transform:scaleX(0.9594999999999999);">Break S_ItemDetails</div><div style="position:absolute;top:638.44px;font-size:10.9px;line-height:12.54px;font-weight:400;color:#e6e6e6;white-space:nowrap;left:1443.10px;transform-origin:left top;transform:scaleX(0.98);">S Item Details</div><div style="position:absolute;top:638.44px;font-size:10.9px;line-height:12.54px;font-weight:400;color:#e6e6e6;white-space:nowrap;right:302.90px;transform-origin:right top;transform:scaleX(0.98);">Durability Details</div><div class="node" style="left:1415.20px;top:691.20px;width:241.40px;height:68.00px;background:rgba(12,14,12,0.82);border-radius:6px"><div class="hdr" style="height:18.80px;background:linear-gradient(to bottom, rgba(120,170,255,0.35) 0px, rgba(255,255,255,0.05) 2.5px, rgba(0,0,0,0) 8px, rgba(0,0,0,0.15) 100%), linear-gradient(to right, #1b4a8c 0%, #1a4584 25%, #183a6c 55%, #1d2d45 85%, #292b2e 100%)"></div></div><div style="position:absolute;top:695.19px;font-size:11.5px;line-height:13.22px;font-weight:700;color:#d9d9d9;white-space:nowrap;left:1439.30px;transform-origin:left top;transform:scaleX(0.9594999999999999);">Break S_DurabilityDetails</div><div style="position:absolute;top:721.04px;font-size:10.9px;line-height:12.54px;font-weight:400;color:#e6e6e6;white-space:nowrap;left:1443.10px;transform-origin:left top;transform:scaleX(0.98);">S Durability Details</div><div style="position:absolute;top:721.04px;font-size:10.9px;line-height:12.54px;font-weight:400;color:#e6e6e6;white-space:nowrap;right:290.90px;transform-origin:right top;transform:scaleX(0.98);">Max Durability</div><div class="node" style="left:1707.20px;top:371.80px;width:154.80px;height:79.80px;background:rgba(12,14,12,0.82);border-radius:6px"><div class="hdr" style="height:18.20px;background:linear-gradient(to bottom, rgba(255,255,255,0.28) 0px, rgba(255,255,255,0.06) 2.5px, rgba(0,0,0,0) 8px, rgba(0,0,0,0.12) 100%), linear-gradient(to right, #8a8a8a 0%, #7a7a7a 18%, #626262 45%, #4a4a4a 75%, #383838 100%)"></div></div><div style="position:absolute;top:375.79px;font-size:11.5px;line-height:13.22px;font-weight:700;color:#d9d9d9;white-space:nowrap;left:1731.80px;transform-origin:left top;transform:scaleX(0.9594999999999999);">Branch</div><div style="position:absolute;top:429.24px;font-size:10.9px;line-height:12.54px;font-weight:400;color:#e6e6e6;white-space:nowrap;left:1735.10px;transform-origin:left top;transform:scaleX(0.98);">Condition</div><div style="position:absolute;top:402.04px;font-size:10.9px;line-height:12.54px;font-weight:400;color:#e6e6e6;white-space:nowrap;right:82.40px;transform-origin:right top;transform:scaleX(0.98);">True</div><div style="position:absolute;top:430.04px;font-size:10.9px;line-height:12.54px;font-weight:400;color:#e6e6e6;white-space:nowrap;right:82.40px;transform-origin:right top;transform:scaleX(0.98);">False</div><div class="node" style="left:1721.7px;top:579.8px;width:108.8px;height:56.4px;border-radius:9px;background:linear-gradient(to bottom, rgba(200,200,200,0.5) 0px, rgba(110,110,110,0.45) 2px, rgba(60,60,60,0.5) 8px, rgba(50,50,50,0.55) 12.5px, rgba(35,35,35,0.5) 13.5px, rgba(40,40,40,0.45) 100%);border:1px solid #1c1c1c;"></div><div class="node" style="left:1915.5px;top:430px;width:30px;height:25.5px;border-radius:6px;background:rgba(30,30,30,0.9);"></div><svg style="position:absolute;left:0;top:0;overflow:visible" width="1919" height="854"><text x="34.2" y="388.2" font-family="Liberation Sans" font-weight="700" font-size="15.5" fill="#f0f0f0">?</text><path d="M37.30 402.50 L40.60 402.50 Q41.50 402.50 42.20 403.20 L46.60 407.70 Q47.10 408.50 46.60 409.30 L42.20 413.80 Q41.50 414.50 40.60 414.50 L37.30 414.50 Q36.00 414.50 36.00 413.20 L36.00 403.80 Q36.00 402.50 37.30 402.50 Z" fill="#f2f2f2"/><circle cx="40.50" cy="435.70" r="4.9" fill="#19a2e6"/><path d="M45.70 433.30 L48.50 435.70 L45.70 438.10 Z" fill="#19a2e6"/><path d="M198.70 402.50 L202.00 402.50 Q202.90 402.50 203.60 403.20 L208.00 407.70 Q208.50 408.50 208.00 409.30 L203.60 413.80 Q202.90 414.50 202.00 414.50 L198.70 414.50 Q197.40 414.50 197.40 413.20 L197.40 403.80 Q197.40 402.50 198.70 402.50 Z" fill="#f2f2f2"/><path d="M199.15 430.45 L202.00 430.45 L207.50 435.70 L202.00 440.95 L199.15 440.95 Q198.15 440.95 198.15 440.00 L198.15 431.40 Q198.15 430.45 199.15 430.45 Z" fill="none" stroke="#e8e8e8" stroke-width="1.5" stroke-linejoin="round"/><path d="M289.80 402.50 L293.10 402.50 Q294.00 402.50 294.70 403.20 L299.10 407.70 Q299.60 408.50 299.10 409.30 L294.70 413.80 Q294.00 414.50 293.10 414.50 L289.80 414.50 Q288.50 414.50 288.50 413.20 L288.50 403.80 Q288.50 402.50 289.80 402.50 Z" fill="#f2f2f2"/><path d="M418.30 402.50 L421.60 402.50 Q422.50 402.50 423.20 403.20 L427.60 407.70 Q428.10 408.50 427.60 409.30 L423.20 413.80 Q422.50 414.50 421.60 414.50 L418.30 414.50 Q417.00 414.50 417.00 413.20 L417.00 403.80 Q417.00 402.50 418.30 402.50 Z" fill="#f2f2f2"/><circle cx="293.00" cy="435.50" r="4.9" fill="#19a2e6"/><path d="M298.20 433.10 L301.00 435.50 L298.20 437.90 Z" fill="#19a2e6"/><circle cx="419.10" cy="435.20" r="4.1" fill="#2a2a2a" stroke="#19a2e6" stroke-width="1.6"/><path d="M424.30 432.80 L427.10 435.20 L424.30 437.60 Z" fill="#19a2e6"/><circle cx="812.50" cy="442.80" r="4.9" fill="#19a2e6"/><path d="M817.70 440.40 L820.50 442.80 L817.70 445.20 Z" fill="#19a2e6"/><path d="M896.90 373.60 Q898.90 374.00 899.90 370.90 L902.10 365.20 Q903.10 362.80 906.10 363.20 M898.90 367.20 H904.30" fill="none" stroke="#6fb0dd" stroke-width="1.3" stroke-linecap="round"/><path d="M899.10 403.80 L902.40 403.80 Q903.30 403.80 904.00 404.50 L908.40 409.00 Q908.90 409.80 908.40 410.60 L904.00 415.10 Q903.30 415.80 902.40 415.80 L899.10 415.80 Q897.80 415.80 897.80 414.50 L897.80 405.10 Q897.80 403.80 899.10 403.80 Z" fill="#f2f2f2"/><path d="M1001.10 403.80 L1004.40 403.80 Q1005.30 403.80 1006.00 404.50 L1010.40 409.00 Q1010.90 409.80 1010.40 410.60 L1006.00 415.10 Q1005.30 415.80 1004.40 415.80 L1001.10 415.80 Q999.80 415.80 999.80 414.50 L999.80 405.10 Q999.80 403.80 1001.10 403.80 Z" fill="#f2f2f2"/><circle cx="903.50" cy="436.60" r="4.9" fill="#19a2e6"/><path d="M908.70 434.20 L911.50 436.60 L908.70 439.00 Z" fill="#19a2e6"/><circle cx="903.50" cy="463.10" r="4.9" fill="#0b6e5e"/><path d="M908.70 460.70 L911.50 463.10 L908.70 465.50 Z" fill="#0b6e5e"/><path d="M840.5 488.8 H846 V499.2 H840.5 M840.5 494 H846 M846 494 H852 M850 492 L852.3 494 L850 496" fill="none" stroke="#eeeeee" stroke-width="1.5"/><path d="M847.50 526.50 L851.70 530.70 L847.50 534.90 L843.30 530.70 Z" fill="none" stroke="#0b6e5e" stroke-width="1.5"/><path d="M1005.00 535.20 L1009.50 539.70 L1014.00 535.20" fill="none" stroke="#dddddd" stroke-width="1.6"/><path d="M847.50 577.30 L851.70 581.50 L847.50 585.70 L843.30 581.50 Z" fill="none" stroke="#0b6e5e" stroke-width="1.5"/><path d="M1005.00 585.90 L1009.50 590.40 L1014.00 585.90" fill="none" stroke="#dddddd" stroke-width="1.6"/><circle cx="847.00" cy="620.20" r="4.9" fill="#9a0b0b"/><path d="M852.20 617.80 L855.00 620.20 L852.20 622.60 Z" fill="#9a0b0b"/><path d="M1122.00 514.30 L1126.20 518.50 L1122.00 522.70 L1117.80 518.50 Z" fill="#0b6e5e"/><circle cx="667.60" cy="484.80" r="4.9" fill="#0a56cf"/><path d="M672.80 482.40 L675.60 484.80 L672.80 487.20 Z" fill="#0a56cf"/><rect x="548.00" y="504.70" width="7.9" height="4.6" rx="2.3" fill="#f0f0f0"/><path d="M556.60 503.70 L558.80 501.70 M556.60 510.50 L558.80 512.40" stroke="#f0f0f0" stroke-width="1.5" stroke-linecap="round"/><circle cx="556.00" cy="532.50" r="4.9" fill="#0a56cf"/><path d="M561.20 530.10 L564.00 532.50 L561.20 534.90 Z" fill="#0a56cf"/><circle cx="692.00" cy="532.50" r="4.9" fill="#0a56cf"/><path d="M697.20 530.10 L700.00 532.50 L697.20 534.90 Z" fill="#0a56cf"/><path d="M621.70 553.30 L626.20 557.80 L630.70 553.30" fill="none" stroke="#f0f0f0" stroke-width="2"/><path d="M549.70 582.20 Q551.70 582.60 552.70 579.50 L554.90 573.80 Q555.90 571.40 558.90 571.80 M551.70 575.80 H557.10" fill="none" stroke="#9fe08f" stroke-width="1.3" stroke-linecap="round"/><circle cx="556.00" cy="602.20" r="4.9" fill="#0a56cf"/><path d="M561.20 599.80 L564.00 602.20 L561.20 604.60 Z" fill="#0a56cf"/><circle cx="697.00" cy="602.20" r="4.1" fill="#101010" stroke="#8e0c0c" stroke-width="1.6"/><path d="M702.20 599.80 L705.00 602.20 L702.20 604.60 Z" fill="#8e0c0c"/><circle cx="697.00" cy="629.00" r="4.9" fill="#0a56cf"/><path d="M702.20 626.60 L705.00 629.00 L702.20 631.40 Z" fill="#0a56cf"/><rect x="548.00" y="658.20" width="7.9" height="4.6" rx="2.3" fill="#f0f0f0"/><path d="M556.60 657.20 L558.80 655.20 M556.60 664.00 L558.80 665.90" stroke="#f0f0f0" stroke-width="1.5" stroke-linecap="round"/><circle cx="556.00" cy="685.80" r="4.9" fill="#0a56cf"/><path d="M561.20 683.40 L564.00 685.80 L561.20 688.20 Z" fill="#0a56cf"/><circle cx="763.50" cy="685.80" r="4.9" fill="#9a0b0b"/><path d="M768.70 683.40 L771.50 685.80 L768.70 688.20 Z" fill="#9a0b0b"/><path d="M657.00 710.60 L661.50 706.10 L666.00 710.60" fill="none" stroke="#f0f0f0" stroke-width="2"/><circle cx="1362.00" cy="485.00" r="4.9" fill="#0a56cf"/><path d="M1367.20 482.60 L1370.00 485.00 L1367.20 487.40 Z" fill="#0a56cf"/><rect x="1242.50" y="518.20" width="7.9" height="4.6" rx="2.3" fill="#f0f0f0"/><path d="M1251.10 517.20 L1253.30 515.20 M1251.10 524.00 L1253.30 525.90" stroke="#f0f0f0" stroke-width="1.5" stroke-linecap="round"/><circle cx="1250.00" cy="546.90" r="4.9" fill="#0a56cf"/><path d="M1255.20 544.50 L1258.00 546.90 L1255.20 549.30 Z" fill="#0a56cf"/><circle cx="1387.00" cy="546.90" r="4.9" fill="#0a56cf"/><path d="M1392.20 544.50 L1395.00 546.90 L1392.20 549.30 Z" fill="#0a56cf"/><path d="M1317.00 572.30 L1321.50 567.80 L1326.00 572.30" fill="none" stroke="#f0f0f0" stroke-width="2"/><path d="M1245.00 609.70 Q1247.00 610.10 1248.00 607.00 L1250.20 601.30 Q1251.20 598.90 1254.20 599.30 M1247.00 603.30 H1252.40" fill="none" stroke="#9fe08f" stroke-width="1.3" stroke-linecap="round"/><circle cx="1250.00" cy="630.00" r="4.9" fill="#0a56cf"/><path d="M1255.20 627.60 L1258.00 630.00 L1255.20 632.40 Z" fill="#0a56cf"/><circle cx="1392.00" cy="630.00" r="4.1" fill="#101010" stroke="#8e0c0c" stroke-width="1.6"/><path d="M1397.20 627.60 L1400.00 630.00 L1397.20 632.40 Z" fill="#8e0c0c"/><circle cx="1392.00" cy="657.00" r="4.9" fill="#0a56cf"/><path d="M1397.20 654.60 L1400.00 657.00 L1397.20 659.40 Z" fill="#0a56cf"/><rect x="1479.50" y="518.50" width="7.9" height="4.6" rx="2.3" fill="#f0f0f0"/><path d="M1488.10 517.50 L1490.30 515.50 M1488.10 524.30 L1490.30 526.20" stroke="#f0f0f0" stroke-width="1.5" stroke-linecap="round"/><circle cx="1487.00" cy="546.80" r="4.9" fill="#0a56cf"/><path d="M1492.20 544.40 L1495.00 546.80 L1492.20 549.20 Z" fill="#0a56cf"/><circle cx="1627.00" cy="546.80" r="4.9" fill="#3dc21b"/><path d="M1632.20 544.40 L1635.00 546.80 L1632.20 549.20 Z" fill="#3dc21b"/><path d="M1554.50 566.70 L1559.00 571.20 L1563.50 566.70" fill="none" stroke="#f0f0f0" stroke-width="2"/><rect x="1423.50" y="615.70" width="7.9" height="4.6" rx="2.3" fill="#f0f0f0"/><path d="M1432.10 614.70 L1434.30 612.70 M1432.10 621.50 L1434.30 623.40" stroke="#f0f0f0" stroke-width="1.5" stroke-linecap="round"/><circle cx="1431.00" cy="644.40" r="4.9" fill="#0a56cf"/><path d="M1436.20 642.00 L1439.00 644.40 L1436.20 646.80 Z" fill="#0a56cf"/><circle cx="1625.00" cy="644.40" r="4.9" fill="#0a56cf"/><path d="M1630.20 642.00 L1633.00 644.40 L1630.20 646.80 Z" fill="#0a56cf"/><path d="M1526.00 668.90 L1530.50 664.40 L1535.00 668.90" fill="none" stroke="#f0f0f0" stroke-width="2"/><rect x="1423.50" y="698.70" width="7.9" height="4.6" rx="2.3" fill="#f0f0f0"/><path d="M1432.10 697.70 L1434.30 695.70 M1432.10 704.50 L1434.30 706.40" stroke="#f0f0f0" stroke-width="1.5" stroke-linecap="round"/><circle cx="1431.00" cy="727.00" r="4.9" fill="#0a56cf"/><path d="M1436.20 724.60 L1439.00 727.00 L1436.20 729.40 Z" fill="#0a56cf"/><circle cx="1637.00" cy="727.00" r="4.9" fill="#3dc21b"/><path d="M1642.20 724.60 L1645.00 727.00 L1642.20 729.40 Z" fill="#3dc21b"/><path d="M1532.50 747.40 L1537.00 751.90 L1541.50 747.40" fill="none" stroke="#f0f0f0" stroke-width="2"/><path d="M1726 377.5 H1721 V386.5 H1726 M1721 382 H1717.5 M1724 375.5 L1726.3 377.5 L1724 379.5 M1724 384.5 L1726.3 386.5 L1724 388.5" fill="none" stroke="#eeeeee" stroke-width="1.5"/><path d="M1720.10 402.00 L1723.40 402.00 Q1724.30 402.00 1725.00 402.70 L1729.40 407.20 Q1729.90 408.00 1729.40 408.80 L1725.00 413.30 Q1724.30 414.00 1723.40 414.00 L1720.10 414.00 Q1718.80 414.00 1718.80 412.70 L1718.80 403.30 Q1718.80 402.00 1720.10 402.00 Z" fill="#f2f2f2"/><circle cx="1724.00" cy="435.20" r="4.9" fill="#9a0b0b"/><path d="M1729.20 432.80 L1732.00 435.20 L1729.20 437.60 Z" fill="#9a0b0b"/><path d="M1841.25 402.75 L1844.10 402.75 L1849.60 408.00 L1844.10 413.25 L1841.25 413.25 Q1840.25 413.25 1840.25 412.30 L1840.25 403.70 Q1840.25 402.75 1841.25 402.75 Z" fill="none" stroke="#e8e8e8" stroke-width="1.5" stroke-linejoin="round"/><path d="M1840.80 430.00 L1844.10 430.00 Q1845.00 430.00 1845.70 430.70 L1850.10 435.20 Q1850.60 436.00 1850.10 436.80 L1845.70 441.30 Q1845.00 442.00 1844.10 442.00 L1840.80 442.00 Q1839.50 442.00 1839.50 440.70 L1839.50 431.30 Q1839.50 430.00 1840.80 430.00 Z" fill="#f2f2f2"/><circle cx="1739.00" cy="594.80" r="5.0" fill="#8a8a8a" stroke="#3dc21b" stroke-width="1.6"/><circle cx="1739.00" cy="621.00" r="5.0" fill="#8a8a8a" stroke="#3dc21b" stroke-width="1.6"/><path d="M1779.8 605.3 L1771.8 609.8 L1779.8 614.3" fill="none" stroke="#cfcfcf" stroke-width="2.3"/><circle cx="1813.00" cy="608.00" r="5.0" fill="#8a8a8a" stroke="#b01010" stroke-width="1.6"/><circle cx="1890.3" cy="407" r="5.2" fill="#f2f2f2"/><path d="M1896 404.6 L1898.5 407 L1896 409.4 Z" fill="#f2f2f2"/></svg><div style="position:absolute;left:0.00px;top:0.00px;width:1919.00px;height:37.00px;background:rgba(14,14,14,0.72);box-shadow:0 1px 2px rgba(0,0,0,0.4);"></div><div style="position:absolute;left:0.00px;top:0.00px;width:3.00px;height:854.00px;background:#151515;"></div><svg style="position:absolute;left:0;top:0" width="700" height="37"><path d="M11.5 10.5 H18.5 V13.5 H15 V23 L13 21 L11.5 22.5 Z" fill="#6a6a6a"/><path d="M15 13.8 H22.3 V26 L18.65 22.6 L15 26 Z" fill="#bdbdbd"/><path d="M30.5 16 L35 20 L39.5 16" fill="none" stroke="#9a9a9a" stroke-width="1.3"/><rect x="49.5" y="2" width="1.3" height="33" fill="#1f1f1f"/><rect x="128" y="2" width="1.3" height="33" fill="#1f1f1f"/><path d="M59.5 17.8 L67.5 10.8 V14.5 H78 V21.3 H67.5 V25 Z" fill="#f2f2f2"/><path d="M117 17.8 L109 10.8 V14.5 H98.5 V21.3 H109 V25 Z" fill="#7b7b7b"/><g fill="#cfcfcf" stroke="none"><rect x="141.5" y="9" width="9.5" height="7.8" rx="1.6"/><rect x="157" y="11.3" width="6.3" height="4.8" rx="1.2"/><rect x="143" y="22.5" width="6.3" height="5.5" rx="1.2"/><rect x="155.8" y="21.5" width="6.3" height="5.5" rx="1.2"/></g><path d="M151 13.5 H157 M146 16.5 V22.5 M149.5 15.5 L157 23" stroke="#cfcfcf" stroke-width="1.2"/><path d="M397.8 12.8 L406.2 19 L397.8 25.2" fill="none" stroke="#cccccc" stroke-width="1.6"/><path d="M537.8 12.8 L546 19 L537.8 25.2" fill="none" stroke="#999999" stroke-width="1.6"/></svg><div style="position:absolute;top:8.04px;font-size:18.3px;line-height:21.04px;font-weight:400;color:#a6a6a6;white-space:nowrap;left:178.90px;transform-origin:left top;">BP_WeaponOptionsMenu</div><div style="position:absolute;top:8.58px;font-size:17.7px;line-height:20.35px;font-weight:400;color:#a6a6a6;white-space:nowrap;left:416.70px;transform-origin:left top;">Event Graph</div><div style="position:absolute;top:8.13px;font-size:18.2px;line-height:20.93px;font-weight:400;color:#a6a6a6;white-space:nowrap;left:563.60px;transform-origin:left top;">Begin Play</div></body></html>
